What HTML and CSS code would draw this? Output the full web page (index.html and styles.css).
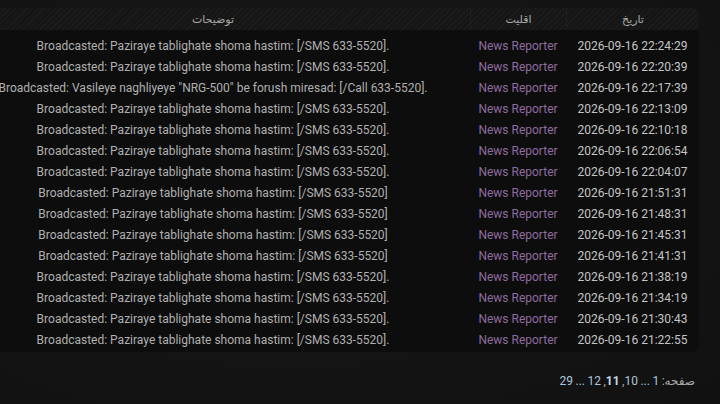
FILE: index.html
```html
<!DOCTYPE html>
<html lang="fa" dir="rtl">
<head>
<meta charset="utf-8">
<link rel="stylesheet" href="styles.css">
</head>
<body>
<div class="page">
  <table class="log">
    <thead>
      <tr><th class="c-date">تاریخ</th><th class="c-who">اقلیت</th><th class="c-desc">توضیحات</th></tr>
    </thead>
    <tbody>
      <tr class="first"><td class="c-date">2026-09-16 22:24:29</td><td class="c-who">News Reporter</td><td class="c-desc">Broadcasted: Paziraye tablighate shoma hastim: [/SMS 633-5520].</td></tr>
      <tr><td class="c-date">2026-09-16 22:20:39</td><td class="c-who">News Reporter</td><td class="c-desc">Broadcasted: Paziraye tablighate shoma hastim: [/SMS 633-5520].</td></tr>
      <tr><td class="c-date">2026-09-16 22:17:39</td><td class="c-who">News Reporter</td><td class="c-desc">Broadcasted: Vasileye naghliyeye "NRG-500" be forush miresad: [/Call 633-5520].</td></tr>
      <tr><td class="c-date">2026-09-16 22:13:09</td><td class="c-who">News Reporter</td><td class="c-desc">Broadcasted: Paziraye tablighate shoma hastim: [/SMS 633-5520].</td></tr>
      <tr><td class="c-date">2026-09-16 22:10:18</td><td class="c-who">News Reporter</td><td class="c-desc">Broadcasted: Paziraye tablighate shoma hastim: [/SMS 633-5520].</td></tr>
      <tr><td class="c-date">2026-09-16 22:06:54</td><td class="c-who">News Reporter</td><td class="c-desc">Broadcasted: Paziraye tablighate shoma hastim: [/SMS 633-5520].</td></tr>
      <tr><td class="c-date">2026-09-16 22:04:07</td><td class="c-who">News Reporter</td><td class="c-desc">Broadcasted: Paziraye tablighate shoma hastim: [/SMS 633-5520].</td></tr>
      <tr><td class="c-date">2026-09-16 21:51:31</td><td class="c-who">News Reporter</td><td class="c-desc">Broadcasted: Paziraye tablighate shoma hastim: [/SMS 633-5520]</td></tr>
      <tr><td class="c-date">2026-09-16 21:48:31</td><td class="c-who">News Reporter</td><td class="c-desc">Broadcasted: Paziraye tablighate shoma hastim: [/SMS 633-5520]</td></tr>
      <tr><td class="c-date">2026-09-16 21:45:31</td><td class="c-who">News Reporter</td><td class="c-desc">Broadcasted: Paziraye tablighate shoma hastim: [/SMS 633-5520]</td></tr>
      <tr><td class="c-date">2026-09-16 21:41:31</td><td class="c-who">News Reporter</td><td class="c-desc">Broadcasted: Paziraye tablighate shoma hastim: [/SMS 633-5520]</td></tr>
      <tr><td class="c-date">2026-09-16 21:38:19</td><td class="c-who">News Reporter</td><td class="c-desc">Broadcasted: Paziraye tablighate shoma hastim: [/SMS 633-5520].</td></tr>
      <tr><td class="c-date">2026-09-16 21:34:19</td><td class="c-who">News Reporter</td><td class="c-desc">Broadcasted: Paziraye tablighate shoma hastim: [/SMS 633-5520].</td></tr>
      <tr><td class="c-date">2026-09-16 21:30:43</td><td class="c-who">News Reporter</td><td class="c-desc">Broadcasted: Paziraye tablighate shoma hastim: [/SMS 633-5520].</td></tr>
      <tr><td class="c-date">2026-09-16 21:22:55</td><td class="c-who">News Reporter</td><td class="c-desc">Broadcasted: Paziraye tablighate shoma hastim: [/SMS 633-5520].</td></tr>
    </tbody>
  </table>
  <div class="pager">صفحه: <a class="pg">1</a> <span class="dots">...</span> <a class="pg">10</a>, <a class="pg cur">11</a>, <a class="pg">12</a> <span class="dots">...</span> <a class="pg">29</a></div>
</div>
</body>
</html>
```
FILE: styles.css
```css
html, body {
  margin: 0;
  padding: 0;
  height: 100%;
}
body {
  background: radial-gradient(ellipse at 40% 40%, #181818 0%, #141414 60%, #111111 100%);
  font-family: Roboto, "DejaVu Sans", sans-serif;
  overflow: hidden;
}
.page {
  direction: rtl;
  padding: 8px 21px 0 0;
}
.log {
  width: 743px;
  border-collapse: separate;
  border-spacing: 0;
  background: #0d0d0d;
  border-radius: 6px;
  table-layout: fixed;
  font-size: 12px;
}
.log th {
  height: 22px;
  padding: 0;
  font-weight: normal;
  font-size: 11px;
  color: #a8a8a8;
  background: repeating-linear-gradient(-45deg, #1d1d1d 0 1px, #161616 1px 4px);
  border-left: 1px solid #202020;
}
.log th.c-date { border-top-right-radius: 6px; }
.log th.c-desc { border-left: none; }
.log td {
  height: 21px;
  padding: 0;
  text-align: center;
  white-space: nowrap;
  line-height: 21px;
}
.log tr.first td {
  padding-top: 6px;
}
.log tbody tr:last-child td {
  padding-bottom: 1px;
}
.c-date { width: 132px; color: #c4c4c4; }
td.c-date { direction: ltr; }
.c-who { width: 95px; color: #8d6c9f; }
.c-desc { color: #b0b0b0; }
td.c-desc { direction: ltr; }
.pager {
  margin-top: 22px;
  padding-right: 4px;
  font-size: 12px;
  color: #a9a9a9;
  word-spacing: -0.5px;
}
.pg { color: #a9c6d8; }
.pg.cur { font-weight: bold; color: #c3d8e6; }
.dots { color: #a9c6d8; }
```
